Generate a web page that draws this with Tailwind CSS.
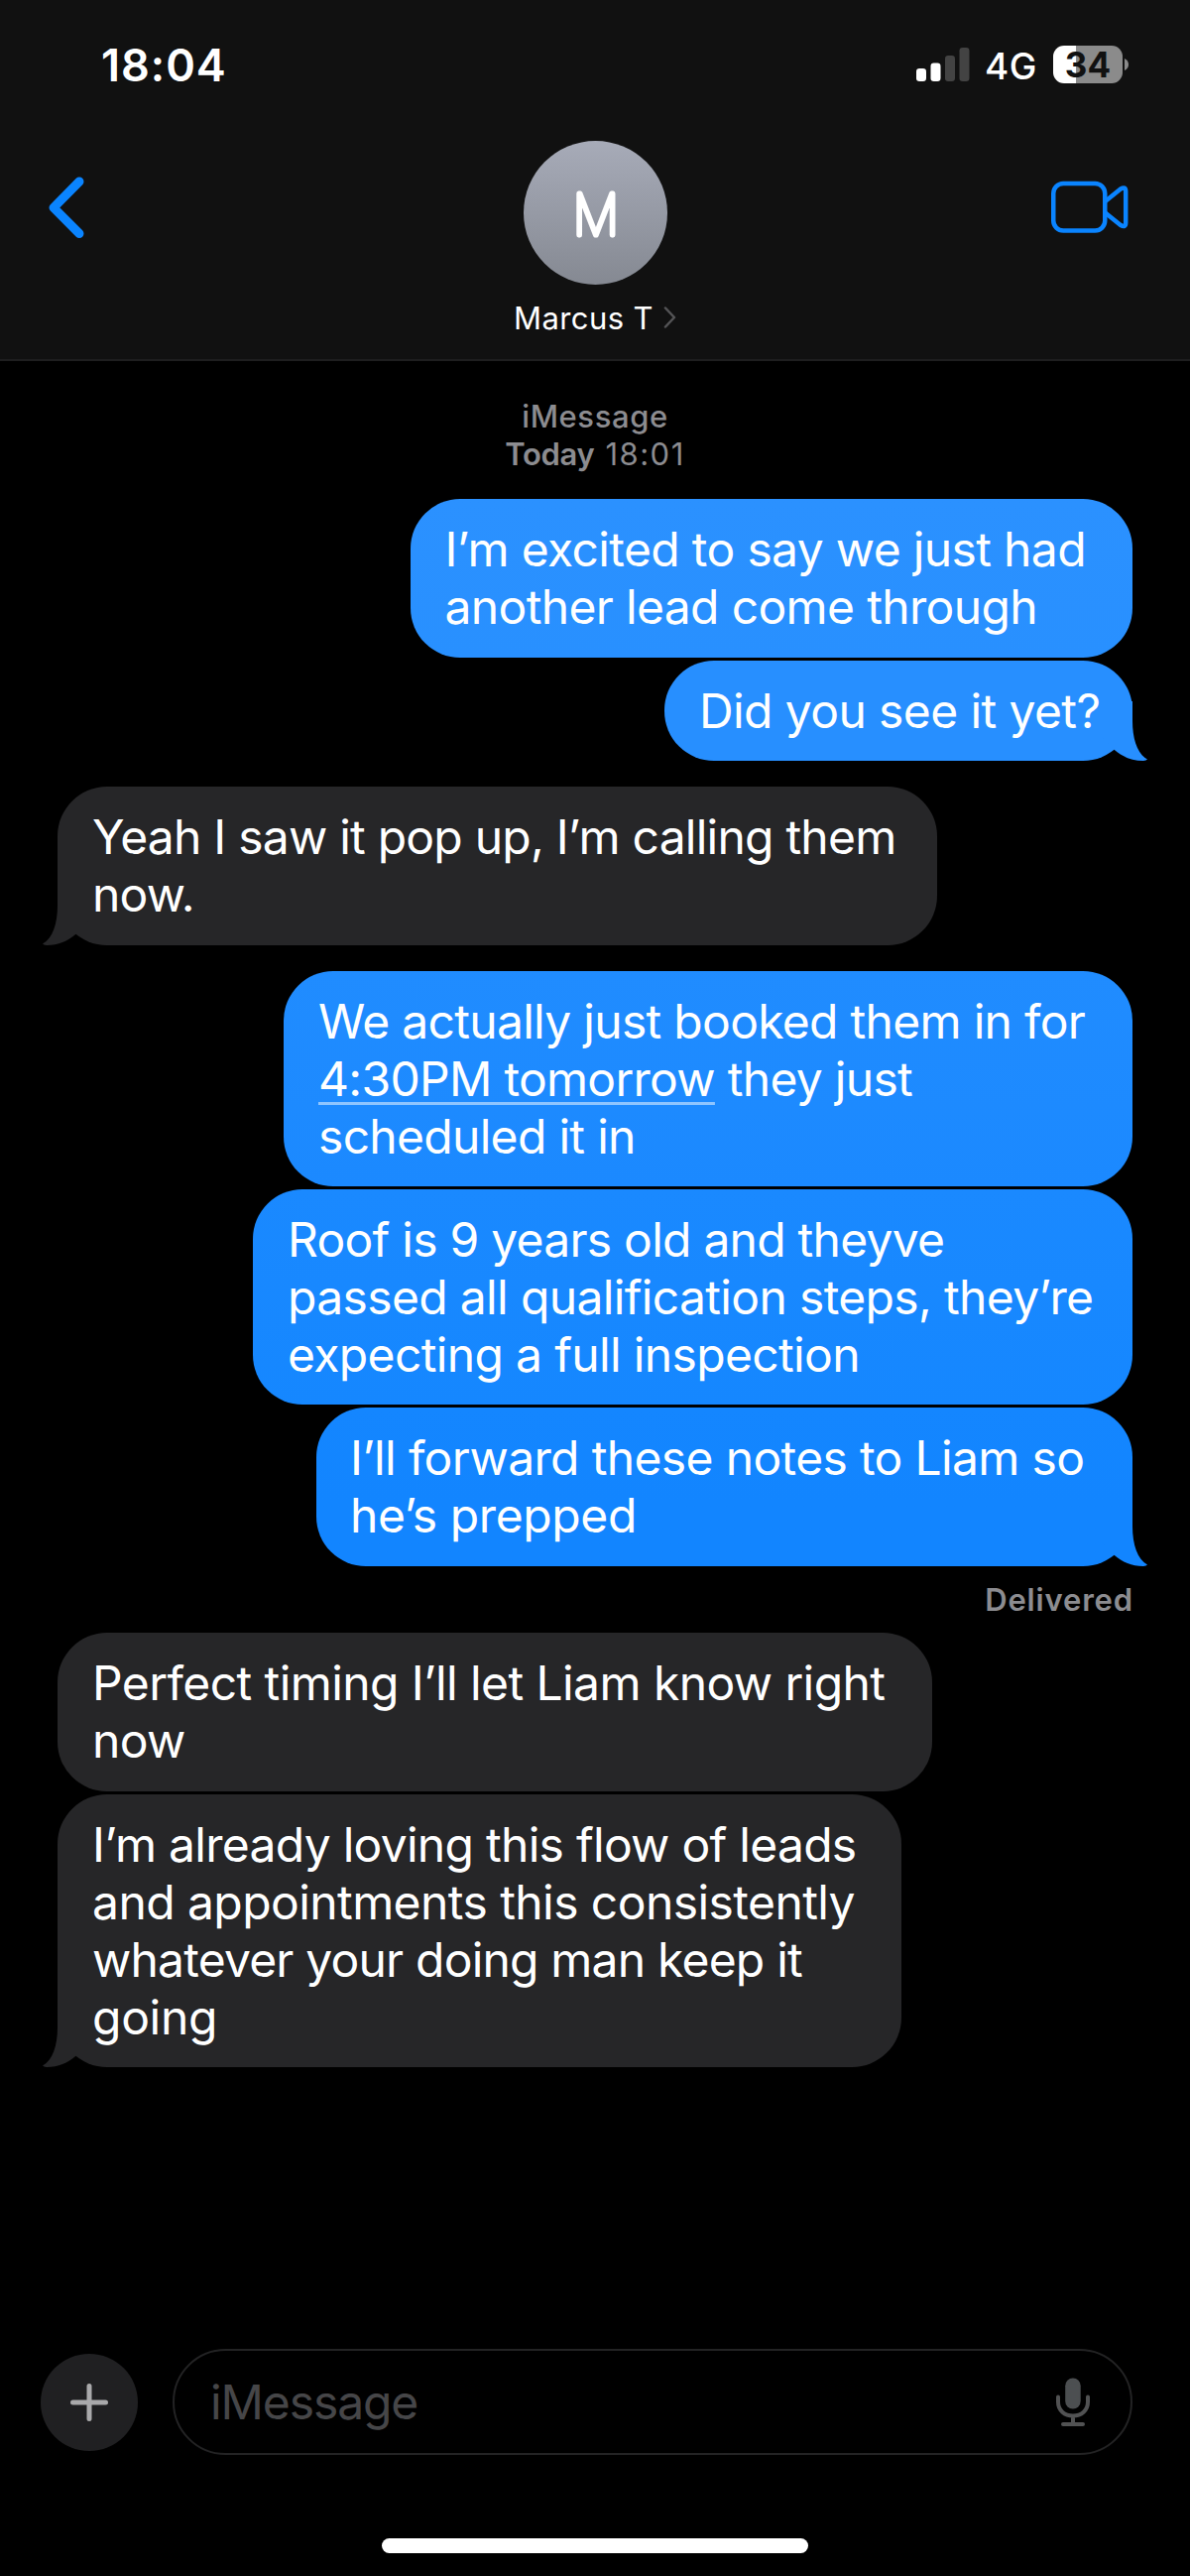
<!DOCTYPE html>
<html lang="en">
<head>
<meta charset="utf-8">
<title>Messages</title>
<script src="https://cdn.jsdelivr.net/npm/@tailwindcss/browser@4"></script>
</head>
<body class="bg-black">
<svg class="hidden">
  <symbol id="tail" viewBox="0 0 56 60">
    <path d="M41 0V20C41 38 46 53 56 58.6Q55 60 52 60C40 60 31 56 22.5 48.8L10 36V0Z" fill="currentColor"/>
  </symbol>
</svg>
<div class="flex h-[2597px] w-[1200px] flex-col overflow-hidden bg-black font-[Inter,sans-serif] text-white">

  <header class="h-[364px] shrink-0 border-b-2 border-[#1e1e1f] bg-[#111111]">
    <div class="mb-3 flex h-[130px] items-center justify-between pl-[102px] pr-[62px]">
      <span class="text-[45px] font-semibold leading-none tracking-[1px]">18:04</span>
      <div class="flex items-center">
        <svg class="h-[34px] w-[54px]" viewBox="0 0 54 34">
          <rect x="0" y="21" width="10" height="13" rx="3.2" fill="#fff"/>
          <rect x="14.5" y="15.5" width="10" height="18.5" rx="3.2" fill="#fff"/>
          <rect x="29" y="8" width="10" height="26" rx="3.2" fill="#434343"/>
          <rect x="43.5" y="0" width="10" height="34" rx="3.2" fill="#434343"/>
        </svg>
        <span class="ml-[15px] mt-[3px] w-[69px] text-[37px] font-medium leading-none tracking-[0.5px]">4G</span>
        <div class="flex h-[38px] w-[70px] items-center justify-center rounded-[11px] bg-[linear-gradient(90deg,#fff_33.5%,#8b8b8b_33.5%)] text-[35px] font-bold leading-none text-[#111111]">34</div>
        <svg class="ml-[2px] h-3 w-1" viewBox="0 0 4 12"><path d="M0 0Q4 2 4 6T0 12Z" fill="#8b8b8b"/></svg>
      </div>
    </div>
    <div class="flex h-[145px] items-start justify-between pl-12 pr-[62px]">
      <svg class="mt-[35px] mr-[14px] h-[64px] w-[78px]" viewBox="0 0 78 64"><path d="M32 6L6 32.300L32 58.500" fill="none" stroke="#0a84ff" stroke-width="9" stroke-linecap="round" stroke-linejoin="round"/></svg>
      <svg class="size-[145px]" viewBox="0 0 145 145">
        <defs><linearGradient id="av" x1="0" y1="0" x2="0" y2="1"><stop offset="0" stop-color="#a7abb8"/><stop offset="1" stop-color="#858992"/></linearGradient></defs>
        <circle cx="72.500" cy="72.500" r="72.500" fill="url(#av)"/>
        <text transform="translate(73 95) scale(.9 1)" text-anchor="middle" font-family="Inter" font-size="57.500" font-weight="100" fill="#fff" stroke="#fff" stroke-width="5" stroke-linejoin="round">M</text>
      </svg>
      <svg class="mt-[40px] h-[54px] w-[78px]" viewBox="0 0 78 54" fill="none" stroke="#0a84ff" stroke-width="4.500" stroke-linejoin="round"><rect x="2.250" y="3" width="52" height="47.500" rx="10"/><path d="M54.500 21L70 8.500Q75.200 5.500 75.200 11V42.500Q75.200 48 70 45L54.500 32.500"/></svg>
    </div>
    <div class="flex h-[66px] items-center justify-center text-[31px]">
      <span class="leading-none tracking-[0.4px]">Marcus T</span>
      <svg class="ml-[10px] h-[22px] w-[13px]" viewBox="0 0 13 22"><path d="M2 1.500L11 11L2 20.500" fill="none" stroke="#545456" stroke-width="2.500" stroke-linecap="round" stroke-linejoin="round"/></svg>
    </div>
  </header>

  <main class="flex flex-1 flex-col pl-[58px] pr-[58px] text-[48px] leading-[58px] tracking-[-0.65px]">
    <div class="mt-[37px] mb-[26px] text-center text-[31px] font-medium leading-[38px] tracking-[0.6px] text-[#8c8c90]">
      <p>iMessage</p>
      <p><span class="font-semibold tracking-[-0.3px]">Today</span> <span class="ml-[2px] font-normal tracking-[1.5px]">18:01</span></p>
    </div>

    <div class="h-[160px] w-[728.5px] self-end whitespace-nowrap rounded-[50px] bg-linear-to-b from-[#2b91ff] to-[#2890ff] pl-[35px] pt-[22px]">
      I’m excited to say we just had<br>another lead come through
    </div>
    <div class="relative mt-[3px] h-[101px] w-[472px] self-end whitespace-nowrap rounded-[50px] bg-[#278fff] pl-[35px] pt-[22px] tracking-[-0.6px]">
      Did you see it yet?
      <svg class="absolute bottom-0 right-[-15px] h-[60px] w-[56px] text-[#278fff]"><use href="#tail"/></svg>
    </div>

    <div class="relative mt-[26px] h-[160px] w-[887px] whitespace-nowrap rounded-[50px] bg-[#262628] pl-[35px] pt-[22px] tracking-[-0.77px]">
      Yeah I saw it pop up, I’m calling them<br>now.
      <svg class="absolute bottom-0 left-[-15px] h-[60px] w-[56px] -scale-x-100 text-[#262628]"><use href="#tail"/></svg>
    </div>

    <div class="mt-[26px] h-[217px] w-[856px] self-end whitespace-nowrap rounded-[50px] bg-linear-to-b from-[#208cff] to-[#1b89ff] pl-[35px] pt-[22px] tracking-[-0.7px]">
      We actually just booked them in for<br><span class="underline decoration-white/50 decoration-[3px] underline-offset-[6px] [text-decoration-skip-ink:none]">4:30PM tomorrow</span> they just<br>scheduled it in
    </div>
    <div class="mt-[3px] h-[217px] w-[887px] self-end whitespace-nowrap rounded-[50px] bg-linear-to-b from-[#1a89ff] to-[#1587ff] pl-[35px] pt-[22px]">
      <span class="tracking-[-0.75px]">Roof is 9 years old and theyve</span><br>passed all qualification steps, they’re<br>expecting a full inspection
    </div>
    <div class="relative mt-[3px] h-[159.5px] w-[823px] self-end whitespace-nowrap rounded-[50px] bg-linear-to-b from-[#1486ff] to-[#1285ff] to-60% pl-[34px] pt-[22px]">
      I’ll forward these notes to Liam so<br><span class="tracking-[-0.4px]">he’s prepped</span>
      <svg class="absolute bottom-0 right-[-15px] h-[60px] w-[56px] text-[#1285ff]"><use href="#tail"/></svg>
    </div>
    <div class="-mr-px flex h-[67.5px] items-center justify-end text-[31px] font-semibold leading-none tracking-[0.85px] text-[#8c8c90]">Delivered</div>

    <div class="h-[159.5px] w-[882px] whitespace-nowrap rounded-[50px] bg-[#262628] pl-[35px] pt-[22px] tracking-[-0.58px]">
      Perfect timing I’ll let Liam know right<br>now
    </div>
    <div class="relative mt-[3px] h-[275.5px] w-[851px] whitespace-nowrap rounded-[50px] bg-[#262628] pl-[35px] pt-[22px]">
      <span class="tracking-[-0.72px]">I’m already loving this flow of leads</span><br><span class="tracking-[-0.57px]">and appointments this consistently</span><br><span class="tracking-[-0.8px]">whatever your doing man keep it</span><br><span class="tracking-[-0.3px]">going</span>
      <svg class="absolute bottom-0 left-[-15px] h-[60px] w-[56px] -scale-x-100 text-[#262628]"><use href="#tail"/></svg>
    </div>
  </main>

  <footer class="shrink-0">
    <div class="flex h-[107px] items-center pl-[40.5px] pr-[58px]">
      <div class="mt-px flex size-[98.5px] items-center justify-center rounded-full bg-[#202022]">
        <svg class="size-[38px]" viewBox="0 0 38 38"><path d="M19 2.500V35.500M2.500 19H35.500" stroke="#a9a9ab" stroke-width="5" stroke-linecap="round"/></svg>
      </div>
      <div class="ml-[35px] flex h-[107px] flex-1 items-center justify-between rounded-full border-[2.5px] border-[#232324] pl-[36px] pr-[41px]">
        <span class="text-[48px] leading-none tracking-[-1.1px] text-[#464648]">iMessage</span>
        <svg class="h-[49px] w-[34px]" viewBox="0 0 34 49" fill="none" stroke="#515253" stroke-width="4" stroke-linecap="round"><rect x="9.200" y="0.500" width="15.500" height="31" rx="7.750" fill="#4c4f51" stroke="none"/><path d="M2 19.500V24.500C2 33 8.500 38.500 17 38.500S32 33 32 24.500V19.500M17 38.500V46M7 47H27"/></svg>
      </div>
    </div>
    <div class="mx-auto mt-[84px] mb-[23.5px] h-[14.5px] w-[429.5px] rounded-full bg-white"></div>
  </footer>
</div>
</body>
</html>
